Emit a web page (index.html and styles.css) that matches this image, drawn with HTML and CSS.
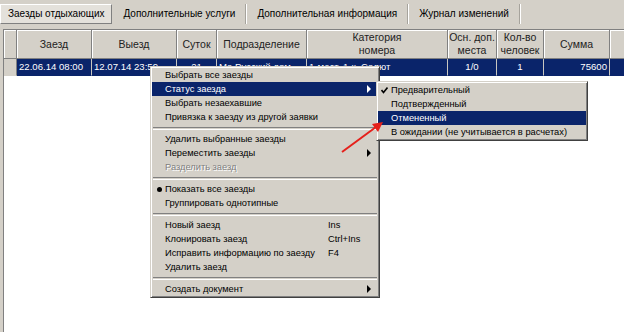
FILE: index.html
```html
<!DOCTYPE html>
<html lang="ru">
<head>
    <meta charset="UTF-8">
    <title>Заезды отдыхающих</title>
    <link rel="stylesheet" href="styles.css">
</head>
<body>
    <div class="tabs">
        <div class="tab active">Заезды отдыхающих</div>
        <div class="tab">Дополнительные услуги</div>
        <div class="tab">Дополнительная информация</div>
        <div class="tab">Журнал изменений</div>
    </div>

    <div class="grid">
        <div class="row head">
            <div class="cell"></div>
            <div class="cell">Заезд</div>
            <div class="cell">Выезд</div>
            <div class="cell">Суток</div>
            <div class="cell">Подразделение</div>
            <div class="cell">Категория<br>номера</div>
            <div class="cell">Осн. доп.<br>места</div>
            <div class="cell">Кол-во<br>человек</div>
            <div class="cell">Сумма</div>
            <div class="cell"></div>
        </div>
        <div class="row data">
            <div class="cell sel"></div>
            <div class="cell">22.06.14 08:00</div>
            <div class="cell">12.07.14 23:59</div>
            <div class="cell center">21</div>
            <div class="cell">Ма Русский дом</div>
            <div class="cell">1-мест. 1-к. Салют</div>
            <div class="cell center">1/0</div>
            <div class="cell center">1</div>
            <div class="cell right">75600</div>
            <div class="cell blank"></div>
        </div>
    </div>

    <div class="menu main-menu">
        <div class="item">Выбрать все заезды</div>
        <div class="item hot sub">Статус заезда</div>
        <div class="item">Выбрать незаехавшие</div>
        <div class="item">Привязка к заезду из другой заявки</div>
        <div class="sep"></div>
        <div class="item">Удалить выбранные заезды</div>
        <div class="item sub">Переместить заезды</div>
        <div class="item disabled">Разделить заезд</div>
        <div class="sep"></div>
        <div class="item radio">Показать все заезды</div>
        <div class="item">Группировать однотипные</div>
        <div class="sep"></div>
        <div class="item"><span>Новый заезд</span><span>Ins</span></div>
        <div class="item"><span>Клонировать заезд</span><span>Ctrl+Ins</span></div>
        <div class="item"><span>Исправить информацию по заезду</span><span>F4</span></div>
        <div class="item">Удалить заезд</div>
        <div class="sep"></div>
        <div class="item sub">Создать документ</div>
    </div>

    <div class="menu sub-menu">
        <div class="item checked">
            <svg class="check" width="7" height="7" viewBox="0 0 7 7"><path d="M0.5 3 L2.5 5.5 L6.5 0.5" fill="none" stroke="#000" stroke-width="1.6"/></svg>
            Предварительный
        </div>
        <div class="item">Подтвержденный</div>
        <div class="item hot">Отмененный</div>
        <div class="item">В ожидании (не учитывается в расчетах)</div>
    </div>

    <svg class="pointer" width="50" height="44" viewBox="0 0 50 44">
        <line x1="4" y1="38" x2="38" y2="13" stroke="#e5201b" stroke-width="2"/>
        <polygon points="45,8 34,10 40,18" fill="#e5201b"/>
    </svg>
</body>
</html>
```

FILE: styles.css
```css
body {
    margin: 0;
    width: 624px;
    height: 332px;
    overflow: hidden;
    background: #d4d0c8;
    font-family: "Liberation Sans", Arial, sans-serif;
    font-size: 10.5px;
    color: #000;
    position: relative;
}

/* tabs */
.tabs {
    display: flex;
    height: 29px;
    padding-top: 4px;
    box-sizing: border-box;
    font-size: 10px;
}
.tab {
    height: 20px;
    line-height: 20px;
    padding: 0 10px;
    border-right: 1px solid #a6a39c;
    box-shadow: 1px 0 0 #fff;
    margin-right: 1px;
}
.tab.active {
    padding: 0 7px;
    background: #e4e1db;
    border: 1px solid #fff;
    border-right-color: #808080;
    border-bottom-color: #808080;
    box-shadow: none;
    height: 18px;
    line-height: 18px;
}

/* grid */
.grid {
    margin-left: 3px;
    height: 303px;
    border-left: 1px solid #808080;
    border-top: 1px solid #808080;
    background: #fff;
}
.row {
    display: grid;
    grid-template-columns: 13px 75px 85px 40px 90px 141px 49px 47px 66px 1fr;
}
.head .cell {
    height: 28px;
    background: #d4d0c8;
    border-right: 1px solid #808080;
    border-bottom: 1px solid #808080;
    box-shadow: inset 1px 1px 0 #fff;
    display: flex;
    align-items: center;
    justify-content: center;
    text-align: center;
    line-height: 13px;
    color: #222;
}
.head .cell:last-child {
    border-right: none;
}
.data .cell {
    height: 16px;
    line-height: 16px;
    font-size: 9.6px;
    background: #0a246a;
    color: #fff;
    padding: 0 2px;
    border-right: 1px solid #c8c6c0;
    border-bottom: 1px solid #0a246a;
    white-space: nowrap;
    overflow: hidden;
}
.data .cell.sel {
    background: #d4d0c8;
    border-bottom-color: #d4d0c8;
    border-right-color: #808080;
}
.data .cell.blank {
    border-right: none;
}
.center { text-align: center; }
.right { text-align: right; }

/* popup menus */
.menu {
    position: absolute;
    background: #d4d0c8;
    border: 1px solid;
    border-color: #d4d0c8 #404040 #404040 #d4d0c8;
    box-shadow: inset 1px 1px 0 #fff, inset -1px -1px 0 #808080;
    padding: 1px;
    box-sizing: border-box;
    font-size: 9.3px;
}
.main-menu {
    left: 150px;
    top: 66px;
    width: 230px;
    height: 232px;
}
.sub-menu {
    left: 376px;
    top: 81px;
    width: 212px;
    height: 60px;
}
.item {
    position: relative;
    height: 14px;
    line-height: 14px;
    padding-left: 13px;
    display: grid;
    grid-template-columns: 163px 1fr;
    white-space: nowrap;
}
.sub-menu .item {
    padding-left: 13px;
    display: block;
}
.item.hot {
    background: #0a246a;
    color: #fff;
}
.item.sub::after {
    content: "";
    position: absolute;
    right: 7px;
    top: 3px;
    border-left: 4px solid #000;
    border-top: 4px solid transparent;
    border-bottom: 4px solid transparent;
}
.item.hot.sub::after {
    border-left-color: #fff;
}
.item.disabled {
    color: #808080;
    text-shadow: 1px 1px 0 #fff;
}
.item.radio::before {
    content: "";
    position: absolute;
    left: 5px;
    top: 5px;
    width: 5px;
    height: 5px;
    border-radius: 50%;
    background: #000;
}
.check {
    position: absolute;
    left: 3px;
    top: 4px;
}
.sep {
    height: 1px;
    margin: 3px 1px 2px;
    border-top: 1px solid #808080;
    border-bottom: 1px solid #fff;
}

.pointer {
    position: absolute;
    left: 338px;
    top: 114px;
}
```
